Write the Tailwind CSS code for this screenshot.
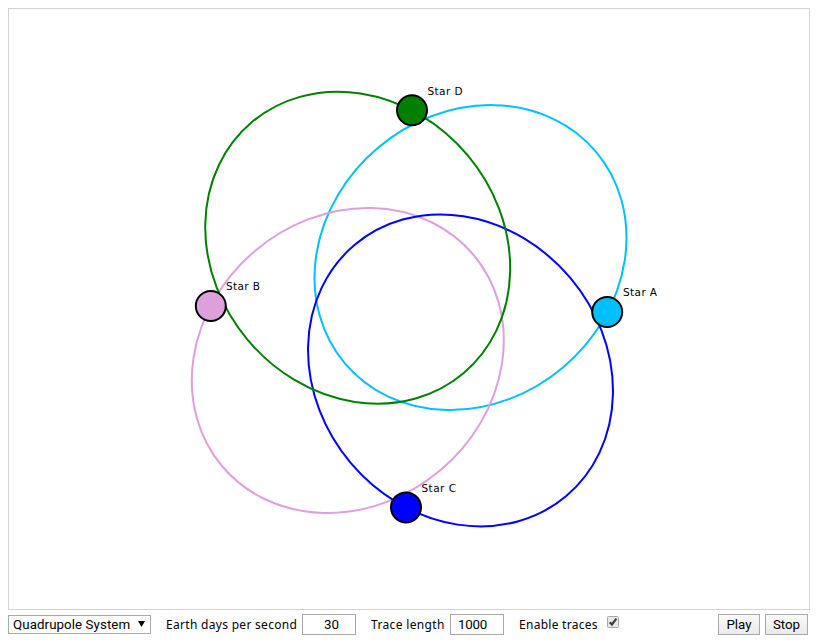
<!DOCTYPE html>
<html lang="en">
<head>
<meta charset="utf-8">
<title>Quadrupole System</title>
<script src="https://cdn.jsdelivr.net/npm/@tailwindcss/browser@4"></script>
</head>
<body class="bg-white text-black pl-2 pt-2 overflow-hidden">
<svg class="block w-[802px] h-[602px] border border-[#d3d3d3]" viewBox="9 9 800 600">
  <g fill="none" stroke-width="2">
    <ellipse cx="470.5" cy="257.6" rx="164.2" ry="143.6" transform="rotate(-40.1 470.5 257.6)" stroke="#00bfff"/>
    <ellipse cx="347.8" cy="360.5" rx="164.2" ry="143.6" transform="rotate(-40.1 347.8 360.5)" stroke="#dda0dd"/>
    <ellipse cx="460.5" cy="370.4" rx="164.2" ry="143.6" transform="rotate(49.9 460.5 370.4)" stroke="#0000ff"/>
    <ellipse cx="357.7" cy="247.7" rx="164.2" ry="143.6" transform="rotate(49.9 357.7 247.7)" stroke="#008000"/>
  </g>
  <g stroke="#000" stroke-width="2">
    <circle cx="607.2" cy="312" r="15" fill="#00bfff"/>
    <circle cx="210.8" cy="306" r="15" fill="#dda0dd"/>
    <circle cx="406" cy="507.4" r="15" fill="#0000ff"/>
    <circle cx="412" cy="110.3" r="15" fill="#008000"/>
  </g>
  <g class="font-['DejaVu_Sans',sans-serif] text-[10.5px]">
    <text x="623" y="296" textLength="34">Star A</text>
    <text x="226" y="290" textLength="34">Star B</text>
    <text x="421.5" y="492" textLength="34.5">Star C</text>
    <text x="427.5" y="95" textLength="35">Star D</text>
  </g>
</svg>
<div class="flex w-[800px] h-[30px] pt-1 items-start font-['Noto_Sans',sans-serif] text-[12px] leading-[22px] whitespace-nowrap">
  <div class="flex justify-between items-center w-[143px] h-[19px] mt-px border border-[#a9a9a9] pl-1 pr-[5px] font-['Roboto',sans-serif] text-[13.33px] leading-[17px] tracking-[0.07px]">
    <span>Quadrupole System</span>
    <svg class="w-[7px] h-[6px] mb-0.5" viewBox="0 0 7 6"><path d="M0 0h7L3.5 6z"/></svg>
  </div>
  <span class="ml-[15px] w-[136px] tracking-[0.3px]">Earth days per second</span>
  <div class="w-[54px] h-[21px] border border-[#a9a9a9] pr-4 text-right font-['Roboto',sans-serif] text-[13.33px] leading-[20px]">30</div>
  <span class="ml-[15px] w-[79px] tracking-[0.35px]">Trace length</span>
  <div class="w-[54px] h-[21px] border border-[#a9a9a9] pl-[7px] font-['Roboto',sans-serif] text-[13.33px] leading-[20px] tracking-[-0.2px]">1000</div>
  <span class="ml-[15px] w-[88px] tracking-[0.27px]">Enable traces</span>
  <svg class="w-3 h-3 mt-0.5" viewBox="0 0 12 12"><rect x=".5" y=".5" width="11" height="11" rx="1" fill="#e8e8e8" stroke="#a9a9a9"/><path d="M2.7 6.2l2.2 2.3L9.4 2.6" fill="none" stroke="#404040" stroke-width="2.2"/></svg>
  <div class="ml-auto flex gap-[5px] font-['Roboto',sans-serif] text-[13.33px] leading-[19px] text-center">
    <button class="w-[42px] h-[21px] border border-[#a9a9a9] bg-linear-to-b from-[#fafafa] to-[#eaeaea]">Play</button>
    <button class="w-[43px] h-[21px] border border-[#a9a9a9] bg-linear-to-b from-[#fafafa] to-[#eaeaea]">Stop</button>
  </div>
</div>
</body>
</html>
